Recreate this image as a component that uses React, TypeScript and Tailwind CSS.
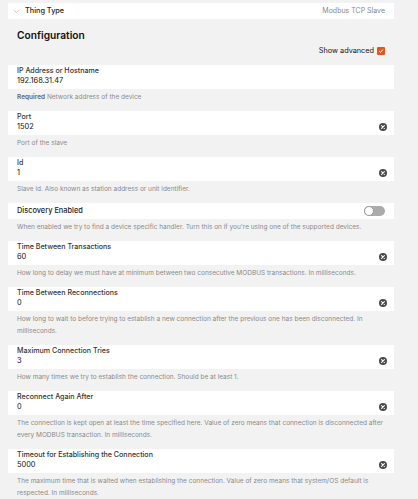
import React from 'react';

interface FieldProps {
  label: string;
  value: string;
  help: React.ReactNode;
}

const ClearIcon: React.FC = () => (
  <svg width="8" height="8" viewBox="0 0 8 8" className="shrink-0">
    <circle cx="4" cy="4" r="4" fill="#4a4a4a" />
    <path d="M2.6 2.6 L5.4 5.4 M5.4 2.6 L2.6 5.4" stroke="#fff" strokeWidth="1.1" strokeLinecap="round" />
  </svg>
);

const Help: React.FC<{ children: React.ReactNode }> = ({ children }) => (
  <div className="pl-[9px] pr-[4px] pt-[2px] pb-[8px] text-[6.5px] leading-[12px] text-[#8a8a8a]">{children}</div>
);

const Field: React.FC<FieldProps> = ({ label, value, help }) => (
  <div>
    <div className="h-[24px] bg-white flex items-start pl-[9px] pr-[7px]">
      <div className="flex-1 pt-[1px]">
        <div className="text-[7.1px] leading-[9px] font-medium text-[#333]">{label}</div>
        <div className="text-[7.4px] leading-[12px] text-[#111]">{value}</div>
      </div>
      <div className="pt-[12px]">
        <ClearIcon />
      </div>
    </div>
    <Help>{help}</Help>
  </div>
);

export default function App() {
  return (
    <div className="w-[418px] h-[499px] overflow-hidden bg-[#f2f2f2] pt-[3px] font-['Inter','Liberation_Sans',sans-serif]">
      <div className="w-[386px] ml-2">
        {/* thing type */}
        <div className="h-[16px] bg-white flex items-center pl-[6px] pr-[9px]">
          <svg width="5" height="3" viewBox="0 0 5 3" className="mr-[6px]">
            <path d="M0.3 0.3 L2.5 2.6 L4.7 0.3" fill="none" stroke="#aaa" strokeWidth="0.7" />
          </svg>
          <span className="text-[7.3px] font-medium text-[#222]">Thing Type</span>
          <span className="ml-auto text-[7px] text-[#888]">Modbus TCP Slave</span>
        </div>

        <div className="pl-[9px] pt-[10px] text-[10.2px] leading-[13px] font-semibold text-[#111]">Configuration</div>

        <div className="mt-[4px] mb-[9px] h-[10px] flex items-center justify-end pr-[9px]">
          <span className="text-[7.3px] text-[#111] mr-[3px]">Show advanced</span>
          <span className="w-[8px] h-[8px] rounded-[1px] bg-[#e8531e] flex items-center justify-center">
            <svg width="6" height="6" viewBox="0 0 6 6">
              <path d="M1.2 3.1 L2.5 4.4 L4.9 1.5" fill="none" stroke="#fff" strokeWidth="1" />
            </svg>
          </span>
        </div>

        <div>
          <div className="h-[24px] bg-white pl-[9px] pt-[1px]">
            <div className="text-[7.1px] leading-[9px] font-medium text-[#333]">IP Address or Hostname</div>
            <div className="text-[7.4px] leading-[12px] text-[#111]">192.168.31.47</div>
          </div>
          <Help>
            <span className="font-semibold text-[#666]">Required</span> Network address of the device
          </Help>
        </div>

        <Field label="Port" value="1502" help="Port of the slave" />
        <Field label="Id" value="1" help="Slave id. Also known as station address or unit identifier." />

        <div>
          <div className="h-[16px] bg-white flex items-center pl-[9px] pr-[9px]">
            <span className="text-[7.4px] font-medium text-[#222]">Discovery Enabled</span>
            <span className="ml-auto relative w-[21px] h-[10px] rounded-full bg-[#ababab]">
              <span className="absolute left-0 top-0 w-[10px] h-[10px] rounded-full bg-white border border-[#9a9a9a]" />
            </span>
          </div>
          <Help>When enabled we try to find a device specific handler. Turn this on if you're using one of the supported devices.</Help>
        </div>

        <Field
          label="Time Between Transactions"
          value="60"
          help="How long to delay we must have at minimum between two consecutive MODBUS transactions. In milliseconds."
        />
        <Field
          label="Time Between Reconnections"
          value="0"
          help="How long to wait to before trying to establish a new connection after the previous one has been disconnected. In milliseconds."
        />
        <Field
          label="Maximum Connection Tries"
          value="3"
          help="How many times we try to establish the connection. Should be at least 1."
        />
        <Field
          label="Reconnect Again After"
          value="0"
          help="The connection is kept open at least the time specified here. Value of zero means that connection is disconnected after every MODBUS transaction. In milliseconds."
        />
        <Field
          label="Timeout for Establishing the Connection"
          value="5000"
          help="The maximum time that is waited when establishing the connection. Value of zero means that system/OS default is respected. In milliseconds."
        />
      </div>
    </div>
  );
}
